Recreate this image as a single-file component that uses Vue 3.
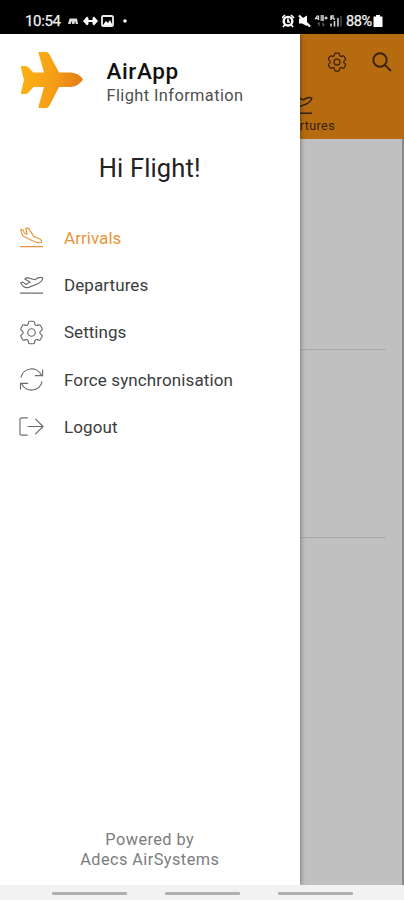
<script setup>
const gear = 'M9.594 3.94c.09-.542.56-.94 1.11-.94h2.593c.55 0 1.02.398 1.11.94l.213 1.281c.063.374.313.686.645.87.074.04.147.083.22.127.325.196.72.257 1.075.124l1.217-.456a1.125 1.125 0 0 1 1.37.49l1.296 2.247a1.125 1.125 0 0 1-.26 1.431l-1.003.827c-.293.241-.438.613-.43.992a7.723 7.723 0 0 1 0 .255c-.008.378.137.75.43.991l1.004.827c.424.35.534.955.26 1.43l-1.298 2.247a1.125 1.125 0 0 1-1.369.491l-1.217-.456c-.355-.133-.75-.072-1.076.124a6.47 6.47 0 0 1-.22.128c-.331.183-.581.495-.644.869l-.213 1.281c-.09.543-.56.94-1.11.94h-2.594c-.55 0-1.019-.398-1.11-.94l-.213-1.281c-.062-.374-.312-.686-.644-.87a6.52 6.52 0 0 1-.22-.127c-.325-.196-.72-.257-1.076-.124l-1.217.456a1.125 1.125 0 0 1-1.369-.49l-1.297-2.247a1.125 1.125 0 0 1 .26-1.431l1.004-.827c.292-.24.437-.613.43-.991a6.932 6.932 0 0 1 0-.255c.007-.38-.138-.751-.43-.992l-1.004-.827a1.125 1.125 0 0 1-.26-1.43l1.297-2.247a1.125 1.125 0 0 1 1.37-.491l1.216.456c.356.133.751.072 1.076-.124.072-.044.146-.086.22-.128.332-.183.582-.495.644-.869l.214-1.28ZM15 12a3 3 0 1 1-6 0 3 3 0 0 1 6 0Z'
const takeoff = 'M1 22H25M4 10.5 1.8 11.5C4 15.5 7 17 10 16L19 12.5C22 11 24.5 8.5 24.7 6.3C22.5 5 20 5.5 16.5 8L8.5 5.8 6 7.3 11.5 10.5 7.5 13Z'

const menu = [
  { label: 'Arrivals', box: '0 0 26 26', path: 'M1 22.5H25M2 4.5 4 5 5.8 8.5 8.5 9.5 7 3.2 10 3.5 15.3 11.8 20 13.7C23 15 24 16.5 23.3 18.2C20.5 19.2 17 18 13.5 16.2L5.5 12.3C3 11 2.2 8.5 2 4.5Z', active: true, spacing: '0.05px' },
  { label: 'Departures', box: '0 0 26 26', path: takeoff, spacing: '0.08px' },
  { label: 'Settings', box: '2 2 20 20', path: gear, spacing: '0.03px' },
  { label: 'Force synchronisation', box: '0 0 26 26', path: 'M2 11A11.3 11.3 0 0 1 23.3 8.5M24.5 2.5V9H16.5M24 15A11.3 11.3 0 0 1 2.7 17.5M1.5 23.5V17H9.5', spacing: '0.11px' },
  { label: 'Logout', box: '0 0 26 26', path: 'M9 4H3Q1 4 1 6V20Q1 22 3 22H9M9 13H24.5M17 5 25 13 17 21', spacing: '0.13px' }
]
</script>

<template>
  <div class="phone">
    <header class="status">
      <span class="clock">10:54</span>
      <svg class="left-icons" width="66" height="16" viewBox="0 0 66 16">
        <path d="M1 11 2.6 5.5H10L11 11H8.8L8 8 7.4 11H5.2L4.8 8 3.6 11Z" fill="#ddd" />
        <path d="M19 8H29" stroke="#fff" stroke-width="2" />
        <path d="M16 8 20 3.5 21.5 5V11L20 12.5ZM31 8 27 3.5 25.5 5V11L27 12.5Z" fill="#fff" />
        <rect x="35" y="3" width="11" height="10" rx="1.3" fill="none" stroke="#eee" stroke-width="1.8" />
        <path d="M36 12 39 8 41 10 43 7 45.5 12Z" fill="#fff" />
        <circle cx="58" cy="8" r="1.8" fill="#fff" />
      </svg>
      <span class="gap" />
      <svg class="right-icons" width="64" height="16" viewBox="0 0 64 16">
        <circle cx="6" cy="8.2" r="4.3" fill="none" stroke="#fff" stroke-width="2.4" />
        <path d="M0 5 3 2M9 2 12 5M2.5 12 1 14M9.5 12 11 14M6 5.5V9H8" fill="none" stroke="#fff" stroke-width="1.7" />
        <path d="M17 5.5H20L25 2.5V13L20 10.5H17Z" fill="#fff" />
        <path d="M17 2.5 28 13.5" stroke="#fff" stroke-width="2.2" />
        <path d="M35.5 2.5 33.5 5.5H37M36.5 2.5V7M38.5 3H42M38.5 5H42M38.5 7H42M42.5 5H45.5M44 3.5V6.5" fill="none" stroke="#ddd" stroke-width="1.3" />
        <path d="M37 13V9.5M35.5 11 37 9.5M41 9.5V13L42.5 11.5" fill="none" stroke="#777" />
        <path d="M49 2.5V7M49 3H52M49 5H51.5L52.5 7M49 13.5V10.5M52.5 13.5V8M56 13.5V5" fill="none" stroke="#ddd" stroke-width="1.5" />
        <path d="M59 13.5V3" stroke="#555" stroke-width="1.3" />
      </svg>
      <span class="battery-text">88%</span>
      <svg class="battery" width="10" height="14" viewBox="0 0 10 14"><path d="M.5 2.5H3V1H7V2.5H9.5V13H.5Z" fill="#fff" /></svg>
    </header>

    <main class="screen">
      <div class="toolbar">
        <div class="actions">
          <svg width="20" height="20" viewBox="2 2 20 20"><path :d="gear" class="line" stroke-width="1.25" /></svg>
          <svg width="20" height="20" viewBox="0 0 20 20"><path d="M14.7 8A6.7 6.7 0 1 1 1.3 8A6.7 6.7 0 1 1 14.7 8M12.8 12.8 19 19" class="line" stroke-width="1.9" /></svg>
        </div>
        <div class="tab">
          <svg width="25" height="25" viewBox="0 0 26 26"><path :d="takeoff" class="line" stroke-width="1.5" /></svg>
          <span>Departures</span>
        </div>
      </div>
      <div class="list">
        <div class="entry" />
        <div class="entry second" />
      </div>

      <aside class="drawer">
        <div class="brand">
          <svg width="64" height="58" viewBox="0 0 64 58">
            <defs><linearGradient id="planeFill" x1="0" y1="0" x2="1" y2="0.15"><stop offset="0" stop-color="#fbb414" /><stop offset=".55" stop-color="#f6a016" /><stop offset="1" stop-color="#e67f18" /></linearGradient></defs>
            <path d="M18.5 2Q18.2 1 19.4 1H26Q28.3 1 29.3 3L39 21.5H51Q59 22 63 28.5Q59 35 51 36H39L29.5 54.5Q28.2 57 26 57H19.5Q18 57 18.5 55.5L24 36H13.5L9 41Q7.5 43 5.2 43H2Q.7 43 .9 41.5L4 29 .8 16.5Q.5 15 2 15H5.2Q7.5 15 9 17L13.5 21.5H24Z" fill="url(#planeFill)" />
          </svg>
          <div class="names">
            <strong>AirApp</strong>
            <span>Flight Information</span>
          </div>
        </div>
        <h1>Hi Flight!</h1>
        <nav class="menu">
          <a v-for="item in menu" :key="item.label" :class="{ active: item.active }">
            <svg width="25" height="25" :viewBox="item.box"><path :d="item.path" class="line" :stroke-width="item.label === 'Settings' ? 0.95 : 1.2" /></svg>
            <span :style="{ letterSpacing: item.spacing }">{{ item.label }}</span>
          </a>
        </nav>
        <footer>Powered by<br>Adecs AirSystems</footer>
      </aside>
    </main>

    <div class="navigation"><i /><i /><i /></div>
  </div>
</template>

<style>
body { overflow: hidden; }
</style>

<style scoped>
.phone { width: 404px; height: 900px; display: flex; flex-direction: column; font-family: Roboto, "Liberation Sans", sans-serif; background: #fff; overflow: hidden; }
svg { display: block; flex: none; }
.line { fill: none; stroke: currentColor; stroke-linejoin: round; }
.status { height: 34px; flex: none; box-sizing: border-box; padding: 7px 21px 0 25px; display: flex; align-items: center; background: #000; color: #f2f2f2; }
.clock { width: 37px; font-size: 15px; white-space: nowrap; letter-spacing: -0.35px; font-weight: 400; -webkit-text-stroke: 0.25px currentColor; }
.left-icons { margin-left: 5px; }
.gap { flex: 1; }
.right-icons { margin-right: 0; }
.battery-text { width: 29px; font-size: 14.5px; font-weight: 400; letter-spacing: -0.4px; white-space: nowrap; -webkit-text-stroke: 0.25px currentColor; padding-top: 1px; }
.battery { margin-left: -2px; }
.screen { position: relative; flex: 1; min-height: 0; display: flex; flex-direction: column; background: #c0c0c0; overflow: hidden; }
.toolbar { height: 104.5px; flex: none; background: #b66b10; color: #33200c; display: flex; flex-direction: column; align-items: flex-end; }
.actions { display: flex; gap: 25px; padding: 18px 12px 0 0; color: #3a220b; }
.tab { width: 68px; margin-right: 69px; padding-top: 20px; display: flex; flex-direction: column; align-items: flex-end; }
.tab svg { margin-right: 22px; }
.tab span { font-size: 12.5px; line-height: 17px; letter-spacing: 0.4px; }
.list { flex: 1; border-right: 2px solid #888; padding-right: 16px; }
.entry { height: 210px; border-bottom: 1px solid #aaa; }
.entry.second { height: 187px; }
.drawer { position: absolute; inset: 0 auto 0 0; width: 299.5px; background: #fff; box-shadow: 0 0 5px rgba(0, 0, 0, .5); display: flex; flex-direction: column; color: #222; }
.brand { display: flex; padding: 17px 0 0 20px; }
.names { display: flex; flex-direction: column; margin-left: 22.5px; padding-top: 7px; }
.names strong { font-size: 22.5px; line-height: 26px; font-weight: 500; color: #111; letter-spacing: 0.6px; }
.names span { font-size: 16.4px; line-height: 20px; letter-spacing: 0.4px; color: #505050; margin-top: 2px; }
h1 { margin: 42px 0 0; text-align: center; font-size: 25.5px; line-height: 34px; font-weight: 400; letter-spacing: 0.15px; color: #222; }
.menu { display: flex; flex-direction: column; padding: 29px 0 0 19.5px; }
.menu a { height: 47.3px; display: flex; align-items: center; gap: 19.5px; font-size: 17px; color: #3c3c3c; }
.menu svg { color: #6c6c6c; margin-left: -0.5px; margin-right: 0.5px; }
.menu .active, .menu .active svg { color: #e8963a; }
footer { margin-top: auto; padding-bottom: 15px; text-align: center; font-size: 16.3px; line-height: 20px; letter-spacing: 0.45px; color: #7c7c7c; }
.navigation { height: 15px; flex: none; box-sizing: border-box; display: flex; gap: 38px; padding: 7px 0 0 52px; background: #f2f2f2; }
.navigation i { width: 75px; height: 3px; border-radius: 1px; background: #b0b0b0; }
</style>
